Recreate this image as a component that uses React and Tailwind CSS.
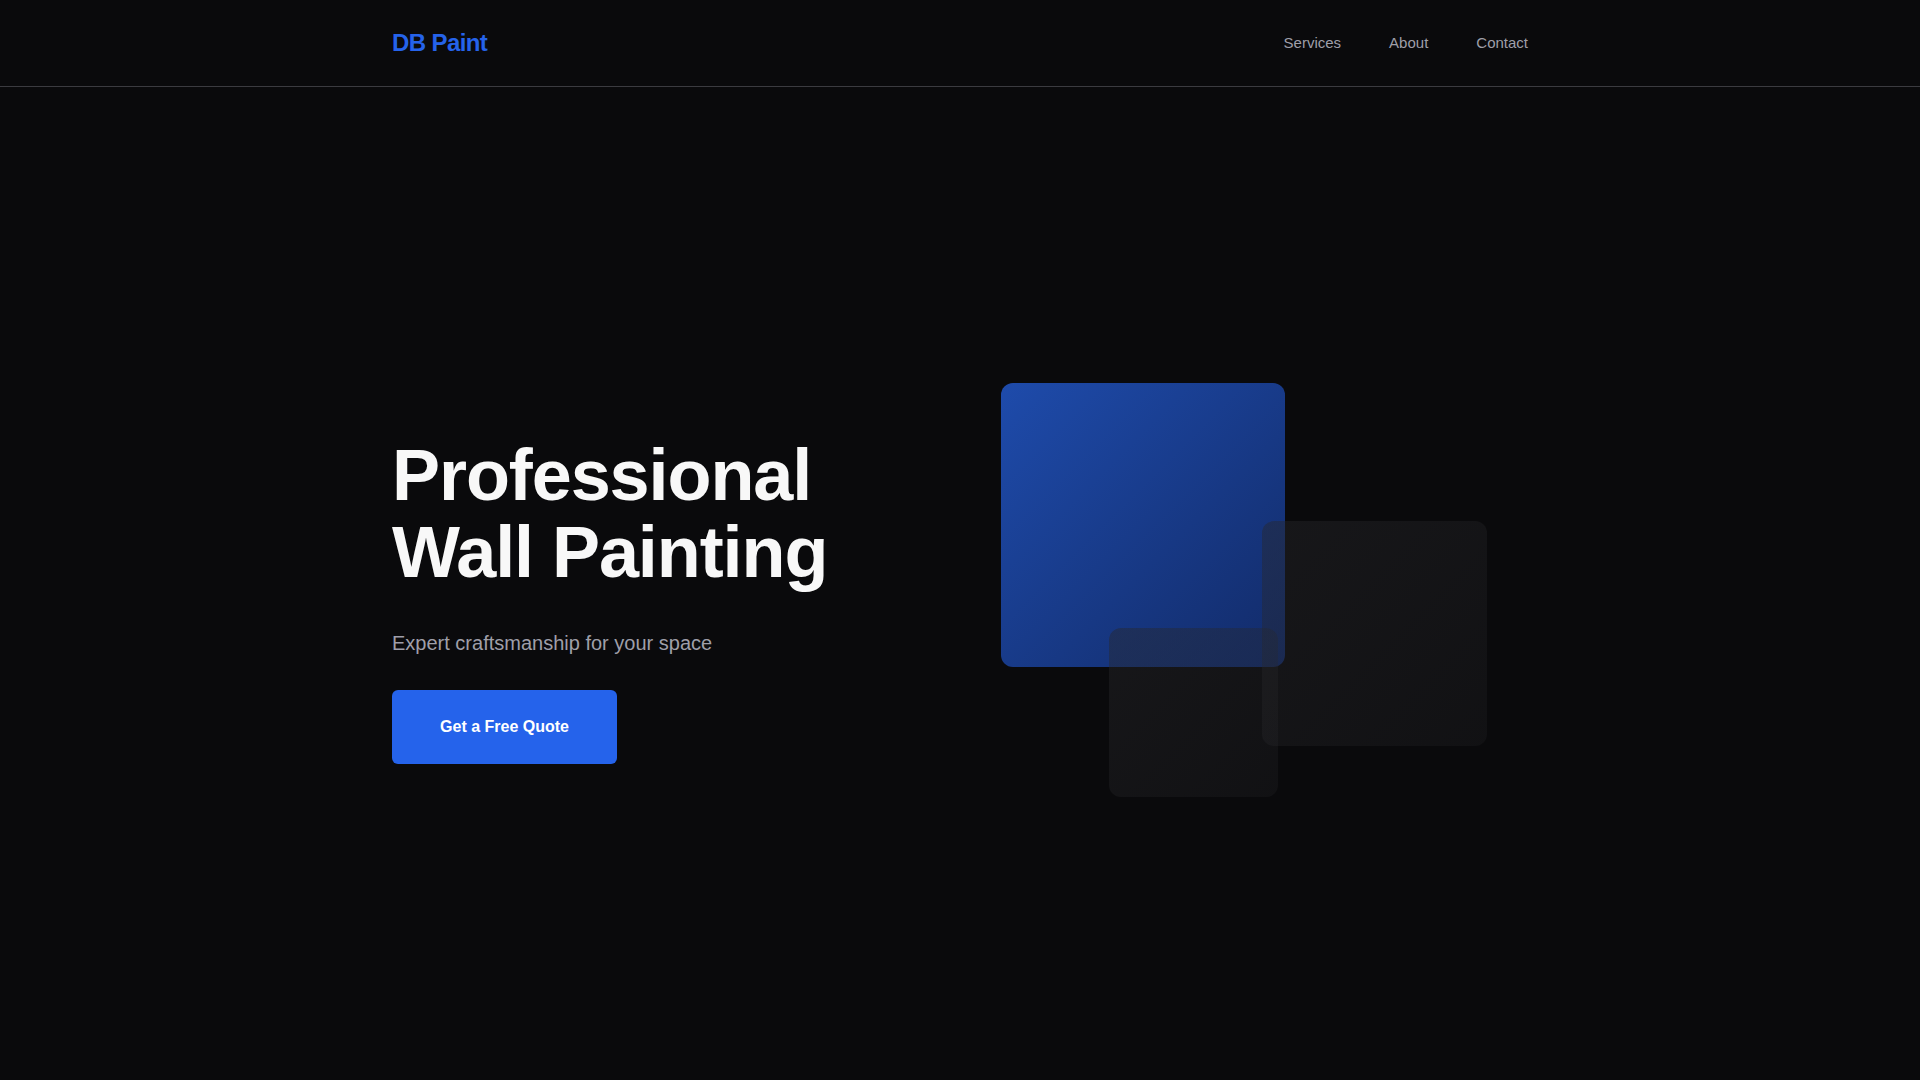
export default function App() {
  return (
    <div
      className="min-h-screen bg-[#0a0a0c] text-white"
      style={{ fontFamily: '"Liberation Sans", Arial, sans-serif' }}
    >
      <header className="h-[87px] border-b border-[#3b3b40]">
        <div className="mx-auto flex h-full max-w-[1200px] items-center justify-between px-8">
          <div className="text-2xl font-bold tracking-tight text-[#2563eb]">DB Paint</div>
          <nav className="flex items-center gap-12 text-[15px] text-zinc-400">
            <a href="#services">Services</a>
            <a href="#about">About</a>
            <a href="#contact">Contact</a>
          </nav>
        </div>
      </header>

      <main className="mx-auto grid max-w-[1200px] grid-cols-2 px-8 pt-[296px] pb-[200px]">
        <div className="pt-[54px]">
          <h1 className="text-[72px] font-bold leading-[77px] tracking-[-0.015em] text-[#f8f8f8]">
            Professional
            <br />
            Wall Painting
          </h1>
          <p className="mt-[38px] text-xl leading-7 text-zinc-400">
            Expert craftsmanship for your space
          </p>
          <button className="mt-[33px] h-[74px] w-[225px] rounded-md bg-[#2563eb] text-base font-bold text-white">
            Get a Free Quote
          </button>
        </div>

        <div className="flex justify-center">
          <div className="relative h-[414px] w-[486px]">
            <div className="absolute left-0 top-0 h-[284px] w-[284px] rounded-xl bg-gradient-to-br from-[#1e4bab] to-[#122b69]" />
            <div className="absolute left-[261px] top-[138px] h-[225px] w-[225px] rounded-xl bg-gradient-to-br from-zinc-800/45 to-zinc-800/25" />
            <div className="absolute left-[108px] top-[245px] h-[169px] w-[169px] rounded-xl bg-gradient-to-br from-zinc-800/45 to-zinc-800/25" />
          </div>
        </div>
      </main>
    </div>
  );
}
